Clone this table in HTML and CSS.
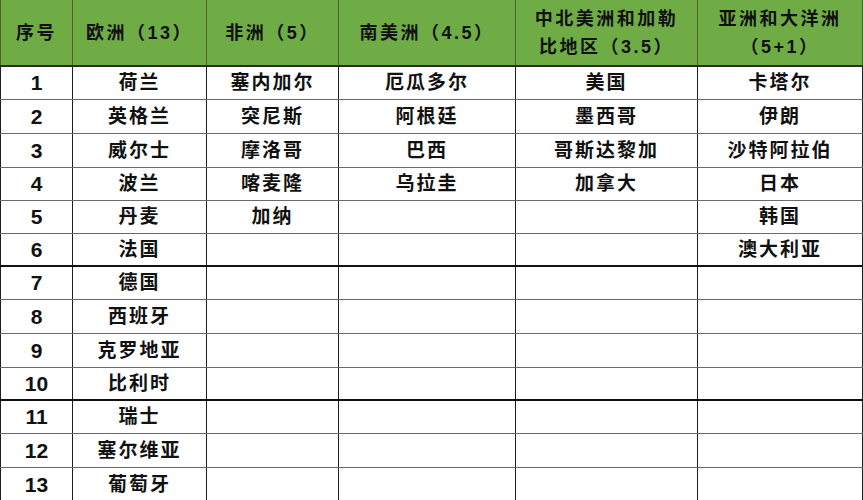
FILE: index.html
```html
<!DOCTYPE html>
<html lang="zh-CN">
<head>
<meta charset="utf-8">
<title>各大洲名额</title>
<link rel="stylesheet" href="styles.css">
</head>
<body>
<table class="quota">
  <colgroup>
    <col class="c1"><col class="c2"><col class="c3"><col class="c4"><col class="c5"><col class="c6">
  </colgroup>
  <thead>
    <tr class="head">
      <th>序号</th>
      <th>欧洲（13）</th>
      <th>非洲（5）</th>
      <th>南美洲（4.5）</th>
      <th>中北美洲和加勒<br>比地区（3.5）</th>
      <th>亚洲和大洋洲<br>（5+1）</th>
    </tr>
  </thead>
  <tbody>
    <tr class="r33"><td class="num">1</td><td>荷兰</td><td>塞内加尔</td><td>厄瓜多尔</td><td>美国</td><td>卡塔尔</td></tr>
    <tr class="r34"><td class="num">2</td><td>英格兰</td><td>突尼斯</td><td>阿根廷</td><td>墨西哥</td><td>伊朗</td></tr>
    <tr class="r34"><td class="num">3</td><td>威尔士</td><td>摩洛哥</td><td>巴西</td><td>哥斯达黎加</td><td>沙特阿拉伯</td></tr>
    <tr class="r33"><td class="num">4</td><td>波兰</td><td>喀麦隆</td><td>乌拉圭</td><td>加拿大</td><td>日本</td></tr>
    <tr class="r33"><td class="num">5</td><td>丹麦</td><td>加纳</td><td></td><td></td><td>韩国</td></tr>
    <tr class="r33 thick"><td class="num">6</td><td>法国</td><td></td><td></td><td></td><td>澳大利亚</td></tr>
    <tr class="r33"><td class="num">7</td><td>德国</td><td></td><td></td><td></td><td></td></tr>
    <tr class="r34"><td class="num">8</td><td>西班牙</td><td></td><td></td><td></td><td></td></tr>
    <tr class="r34"><td class="num">9</td><td>克罗地亚</td><td></td><td></td><td></td><td></td></tr>
    <tr class="r33 thick"><td class="num">10</td><td>比利时</td><td></td><td></td><td></td><td></td></tr>
    <tr class="r33"><td class="num">11</td><td>瑞士</td><td></td><td></td><td></td><td></td></tr>
    <tr class="r34"><td class="num">12</td><td>塞尔维亚</td><td></td><td></td><td></td><td></td></tr>
    <tr class="r34"><td class="num">13</td><td>葡萄牙</td><td></td><td></td><td></td><td></td></tr>
  </tbody>
</table>
</body>
</html>
```
FILE: styles.css
```css
html, body {
  margin: 0;
  padding: 0;
  background: #ffffff;
  overflow: hidden;
}

.quota {
  border-collapse: collapse;
  table-layout: fixed;
  width: 862px;
  font-family: "Liberation Sans", "Noto Sans CJK SC", sans-serif;
  font-weight: 700;
  color: #111;
}

.c1 { width: 72px; }
.c2 { width: 134px; }
.c3 { width: 132px; }
.c4 { width: 177px; }
.c5 { width: 182px; }
.c6 { width: 165px; }

.quota th,
.quota td {
  padding: 0;
  text-align: center;
  vertical-align: middle;
  border-left: 1px solid #1e1e1e;
  border-right: 1px solid #1e1e1e;
  border-bottom: 1px solid #6a6a6a;
  font-size: 19px;
  line-height: 22px;
  letter-spacing: 2px;
  white-space: nowrap;
}

.head th {
  height: 65px;
  background: #6fac46;
  line-height: 28px;
  font-size: 18px;
  letter-spacing: 2.5px;
  font-weight: 700;
  border-bottom: 2px solid #2a2a2a;
  border-left-color: #3f6a28;
  border-right-color: #3f6a28;
}

.r33 td { height: 32px; }
.r34 td { height: 33px; }

.thick td {
  height: 31px;
  border-bottom: 2px solid #111;
}

.thick.r33 + .r33 td { height: 32px; }

.quota td.num {
  font-size: 21px;
  letter-spacing: 0;
}
```
